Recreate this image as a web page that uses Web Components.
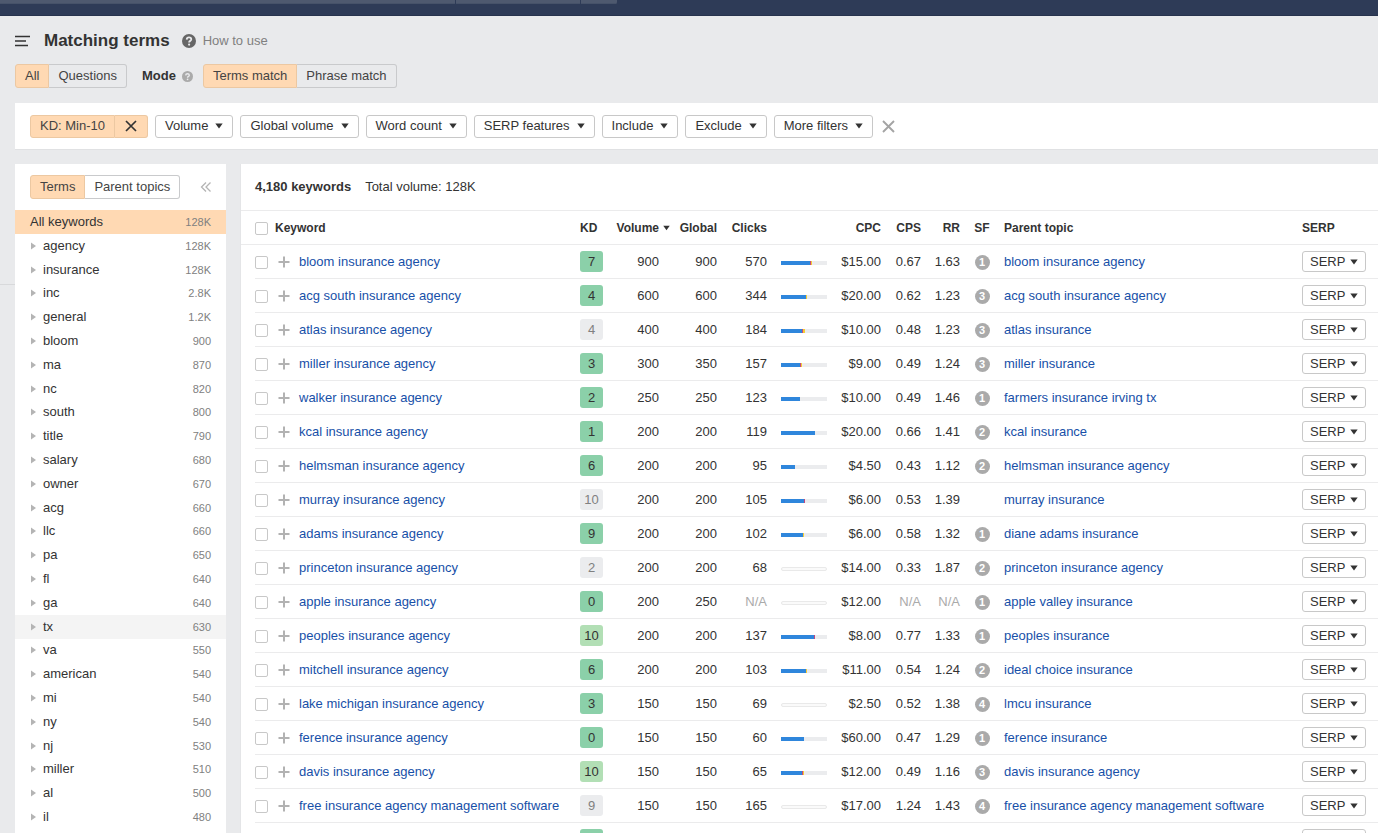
<!DOCTYPE html>
<html lang="en">
<head>
<meta charset="utf-8">
<title>Matching terms</title>
<style>
html,body{margin:0;height:100%}
body{background:#e9eaec;color:#333;font:13px/16px "Liberation Sans",Arial,sans-serif;overflow:hidden}
</style>
</head>
<body>
<keyword-app></keyword-app>
<script>
const caret = '<svg class="caret" width="8" height="6" viewBox="0 0 8 6" aria-hidden="true"><path d="M0.3 0.4H7.7L4 5.6Z" fill="#333"/></svg>';

// Registers an element whose shadow root holds its styles and markup; html may be a string or a function of the element.
const define = (name, css, html) => {
  customElements.define(name, class extends HTMLElement {
    constructor() {
      super();
      this.attachShadow({ mode: 'open' });
    }
    connectedCallback() {
      this.shadowRoot.innerHTML = '<style>*{box-sizing:border-box}' + css + '</style>' + (html instanceof Function ? html(this) : html);
    }
  });
};

define('top-nav', `
:host{display:block;flex:none;box-sizing:border-box;height:16px;background:#2e3b57;border-bottom:1px solid #27334d}
div{display:flex;width:617px;height:4px;gap:1px;border-radius:0 0 2px 0;overflow:hidden}
i{background:#4e596f;border-bottom:1px solid #465269}
i:nth-child(1){flex:455}i:nth-child(2){flex:124}i:nth-child(3){flex:36}
`, '<div><i></i><i></i><i></i></div>');

define('help-icon', `:host{display:block;flex:none;color:#666}svg{display:block}`,
  el => { const s = el.getAttribute('size'); return `<svg width="${s}" height="${s}" viewBox="0 0 14 14" aria-hidden="true"><circle cx="7" cy="7" r="7" fill="currentColor"/><path d="M4.7 5.6Q4.8 3.4 7 3.4T9.3 5.3Q9.3 6.2 8.2 6.9Q7.1 7.5 7.1 8.5" fill="none" stroke="#e9eaec" stroke-width="1.8"/><circle cx="7.1" cy="10.6" r="1.1" fill="#e9eaec"/></svg>`; });

define('segmented-control', `
:host{display:flex;flex:none}
button{height:24px;padding:0 9px;margin:0;font:inherit;color:#444;background:transparent;border:1px solid #c9cacc;border-left-width:0;border-radius:0 3px 3px 0;white-space:nowrap}
style+button{border-left-width:1px;background:#ffd9b3;border-color:#ecc8a2;border-radius:3px 0 0 3px}
`, el => el.getAttribute('options').split('|').map((o, i) => `<button type="button" aria-pressed="${i === 0}">${o}</button>`).join(''));

define('page-head', `
:host{display:block;flex:none;padding:15px 15px}
.title{display:flex;align-items:center;height:20px}
.menu{border:0;background:none;padding:0;width:15px;height:12px;margin-right:14px}
svg{display:block}
h1{margin:0 12px 0 0;font-size:17px;line-height:20px;color:#333}
a{margin-left:7px;color:#808080;text-decoration:none}
.modes{display:flex;align-items:center;margin-top:13px}
b{margin:0 6px 0 15px}
b+help-icon{color:#aaa;margin-right:10px}
`, `<div class="title"><button class="menu" type="button" aria-label="Menu"><svg width="15" height="12" viewBox="0 0 15 12"><path d="M0 1.5H15M0 6H11M0 10.5H13" stroke="#333" stroke-width="1.6"/></svg></button>
<h1>Matching terms</h1><help-icon size="14"></help-icon><a href="#">How to use</a></div>
<div class="modes"><segmented-control options="All|Questions"></segmented-control><b>Mode</b><help-icon size="11"></help-icon><segmented-control options="Terms match|Phrase match"></segmented-control></div>`);

define('drop-button', `
:host{display:block;flex:none}
button{display:flex;align-items:center;gap:var(--gap,7px);width:100%;height:var(--h,23px);padding:0 var(--pad,9px);margin:0;font:inherit;color:#333;background:#fff;border:1px solid #c8c8c8;border-radius:3px;white-space:nowrap}
svg{display:block;flex:none}
`, `<button type="button"><slot></slot>${caret}</button>`);

define('filter-bar', `
:host{display:flex;flex:none;box-sizing:border-box;align-items:center;gap:7px;height:47px;margin-left:15px;padding-left:15px;background:#fff;border-bottom:1px solid #e0e1e3}
.on{display:flex}
.on button,.clear{height:23px;margin:0;font:inherit;color:#444;background:#ffd9b3;border:1px solid #ecc8a2;padding:0 9px}
.on button:first-child{border-radius:3px 0 0 3px}
.on button+button{border-left:0;border-radius:0 3px 3px 0;width:33px}
.on button+button svg{margin-left:1px}
.clear{background:none;border:0;padding:0;width:14px;margin-left:1px}
svg{display:block;margin:auto}
`, `<div class="on"><button type="button">KD: Min-10</button><button type="button" aria-label="Remove KD filter"><svg width="12" height="12" viewBox="0 0 12 12"><path d="M1 1L11 11M11 1L1 11" stroke="#333" stroke-width="1.7"/></svg></button></div>
${['Volume','Global volume','Word count','SERP features','Include','Exclude','More filters'].map(t => `<drop-button>${t}</drop-button>`).join('')}
<button class="clear" type="button" aria-label="Clear filters"><svg width="13" height="13" viewBox="0 0 13 13"><path d="M1 1L12 12M12 1L1 12" stroke="#a4a4a4" stroke-width="1.9"/></svg></button>`);

const terms = 'agency 128K,insurance 128K,inc 2.8K,general 1.2K,bloom 900,ma 870,nc 820,south 800,title 790,salary 680,owner 670,acg 660,llc 660,pa 650,fl 640,ga 640,tx 630,va 550,american 540,mi 540,ny 540,nj 530,miller 510,al 500,il 480'.split(',').map(t => t.split(' '));

define('terms-panel', `
:host{display:flex;flex-direction:column;flex:none;box-sizing:border-box;width:211px;background:#fff;padding-bottom:4px}
.top{display:flex;align-items:center;justify-content:space-between;height:46px;padding:0 14px 0 15px;flex:none}
.fold{border:0;background:none;padding:0;width:12px;height:12px}
svg{display:block}
ul{flex:1;margin:0;padding:0;list-style:none;display:grid;grid-auto-rows:minmax(23px,1fr)}
li{display:flex;align-items:center;padding:0 15px 0 15px}
li svg{margin:0 7px 0 1px}
a{flex:1;color:#333;text-decoration:none}
span{font-size:11px;color:#808080}
.sel{background:#ffd9b3}
.hover{background:#f4f4f4}
`, `<div class="top"><segmented-control options="Terms|Parent topics"></segmented-control><button class="fold" type="button" aria-label="Collapse"><svg width="12" height="12" viewBox="0 0 12 12"><path d="M6 1.5L1.5 6L6 10.5M10.5 1.5L6 6L10.5 10.5" fill="none" stroke="#b4b4b4" stroke-width="1.3"/></svg></button></div>
<ul><li class="sel"><a href="#">All keywords</a><span>128K</span></li>${terms.map(([t, n]) => `<li${t === 'tx' ? ' class="hover"' : ''}><svg width="5" height="8" viewBox="0 0 5 8"><path d="M0 0.5L5 4L0 7.5Z" fill="#b4b4b4"/></svg><a href="#">${t}</a><span>${n}</span></li>`).join('')}</ul>`);

define('click-bar', `
:host{display:block;width:46px}
div{display:flex;height:4px;background:#ebecee;margin-top:2px}
.none{background:#fafafa;border:1px solid #e9e9e9;border-radius:2px}
i{flex:none}
`, el => { const p = el.getAttribute('parts'); if (!p) return '<div class="none"></div>';
  return '<div>' + p.split(',').map((w, i) => `<i style="width:${w}px;background:${['#2f86dc','#c2477e','#f6cc33'][i]}"></i>`).join('') + '</div>'; });

const rows = [
['bloom insurance agency',7,'g',900,900,570,'29,1,1','$15.00','0.67','1.63',1,'bloom insurance agency'],
['acg south insurance agency',4,'g',600,600,344,'25,0,1','$20.00','0.62','1.23',3,'acg south insurance agency'],
['atlas insurance agency',4,'n',400,400,184,'21,1,2','$10.00','0.48','1.23',3,'atlas insurance'],
['miller insurance agency',3,'g',300,350,157,'19,1,1','$9.00','0.49','1.24',3,'miller insurance'],
['walker insurance agency',2,'g',250,250,123,'19,0,0','$10.00','0.49','1.46',1,'farmers insurance irving tx'],
['kcal insurance agency',1,'g',200,200,119,'34,0,0','$20.00','0.66','1.41',2,'kcal insurance'],
['helmsman insurance agency',6,'g',200,200,95,'14,0,0','$4.50','0.43','1.12',2,'helmsman insurance agency'],
['murray insurance agency',10,'n',200,200,105,'23,1,0','$6.00','0.53','1.39','','murray insurance'],
['adams insurance agency',9,'g',200,200,102,'22,0,1','$6.00','0.58','1.32',1,'diane adams insurance'],
['princeton insurance agency',2,'n',200,200,68,'','$14.00','0.33','1.87',2,'princeton insurance agency'],
['apple insurance agency',0,'g',200,250,'N/A','','$12.00','N/A','N/A',1,'apple valley insurance'],
['peoples insurance agency',10,'l',200,200,137,'33,1,0','$8.00','0.77','1.33',1,'peoples insurance'],
['mitchell insurance agency',6,'g',200,200,103,'25,0,1','$11.00','0.54','1.24',2,'ideal choice insurance'],
['lake michigan insurance agency',3,'g',150,150,69,'','$2.50','0.52','1.38',4,'lmcu insurance'],
['ference insurance agency',0,'g',150,150,60,'23,0,0','$60.00','0.47','1.29',1,'ference insurance'],
['davis insurance agency',10,'l',150,150,65,'21,1,1','$12.00','0.49','1.16',3,'davis insurance agency'],
['free insurance agency management software',9,'n',150,150,165,'','$17.00','1.24','1.43',4,'free insurance agency management software'],
['',' ','g','','','',null,'','','','','']
];
const num = v => `<td class="r${v === 'N/A' ? ' na' : ''}">${v}</td>`;

define('keyword-table', `
:host{display:block;flex:1;box-sizing:border-box;min-width:0;background:#fff;border-left:1px solid #e4e5e7;overflow:hidden}
.sum{display:flex;align-items:center;gap:14px;height:47px;padding-left:14px;border-bottom:1px solid #ebebec}
table{border-collapse:separate;border-spacing:0;table-layout:fixed;width:100%}
th{height:34px;padding:0;text-align:left;font-size:12px;white-space:nowrap;border-bottom:1px solid #ebebec}
td{height:34px;padding:0;border-bottom:1px solid #ebebec;white-space:nowrap}
td,th{vertical-align:middle}
td:first-child{border:0}
.r{text-align:right}
.c{text-align:center}
th .caret{position:absolute;margin:5px 0 0 4px;width:7px}
input{appearance:none;display:block;width:13px;height:13px;margin:2px 0 0;border:1px solid #c8c8c8;border-radius:2px;background:#fff}
.plus{display:block;border:0;background:none;padding:0;width:12px;height:12px;margin-left:3px}
.plus svg{display:block}
a{color:#1750a8;text-decoration:none}
.kd{display:block;width:23px;height:21px;border-radius:3px;text-align:center;line-height:21px}
.g{background:#8bd0a9}.l{background:#b2dfb5}.n{background:#ebecee;color:#808080}
.na{color:#aaa}
.sf{display:block;width:15px;height:15px;margin:2px auto 0;border-radius:50%;background:#aaa;color:#fff;font:bold 11px/15px "Liberation Sans",Arial,sans-serif;text-align:center}
click-bar{margin-left:14px}
drop-button{width:64px;--h:21px;--pad:7px;--gap:5px}
`, `<div class="sum"><b>4,180 keywords</b><span>Total volume: 128K</span></div>
<table><colgroup><col style="width:14px"><col style="width:20px"><col style="width:24px"><col><col style="width:34px"><col style="width:45px"><col style="width:58px"><col style="width:50px"><col style="width:60px"><col style="width:54px"><col style="width:40px"><col style="width:39px"><col style="width:44px"><col style="width:298px"><col style="width:76px"></colgroup>
<thead><tr><th></th><th><input type="checkbox" aria-label="Select all"></th><th colspan="2">Keyword</th><th>KD</th><th class="r">Volume${caret}</th><th class="r">Global</th><th class="r">Clicks</th><th></th><th class="r">CPC</th><th class="r">CPS</th><th class="r">RR</th><th class="c">SF</th><th>Parent topic</th><th>SERP</th></tr></thead>
<tbody>${rows.map(r => `<tr><td></td><td><input type="checkbox" aria-label="Select ${r[0]}"></td><td><button class="plus" type="button" aria-label="Add ${r[0]}"><svg width="12" height="12" viewBox="0 0 12 12"><path d="M6 0.5V11.5M0.5 6H11.5" stroke="#b2b2b2" stroke-width="2"/></svg></button></td><td><a href="#">${r[0]}</a></td><td><span class="kd ${r[2]}">${r[1]}</span></td>${num(r[3])}${num(r[4])}${num(r[5])}<td>${r[6] === null ? '' : `<click-bar parts="${r[6]}"></click-bar>`}</td>${num(r[7])}${num(r[8])}${num(r[9])}<td>${r[10] ? `<span class="sf">${r[10]}</span>` : ''}</td><td><a href="#">${r[11]}</a></td><td><drop-button>SERP</drop-button></td></tr>`).join('')}</tbody></table>`);

define('keyword-app', `
:host{display:flex;flex-direction:column;height:100vh;overflow:hidden}
main{position:relative;display:flex;flex:1;min-height:0;gap:14px;margin-top:14px;padding-left:15px}
main::before{content:"";position:absolute;left:0;top:120px;width:15px;height:1px;background:#d8d9db}
`, `<top-nav></top-nav><page-head></page-head><filter-bar></filter-bar><main><terms-panel></terms-panel><keyword-table></keyword-table></main>`);
</script>
</body>
</html>
